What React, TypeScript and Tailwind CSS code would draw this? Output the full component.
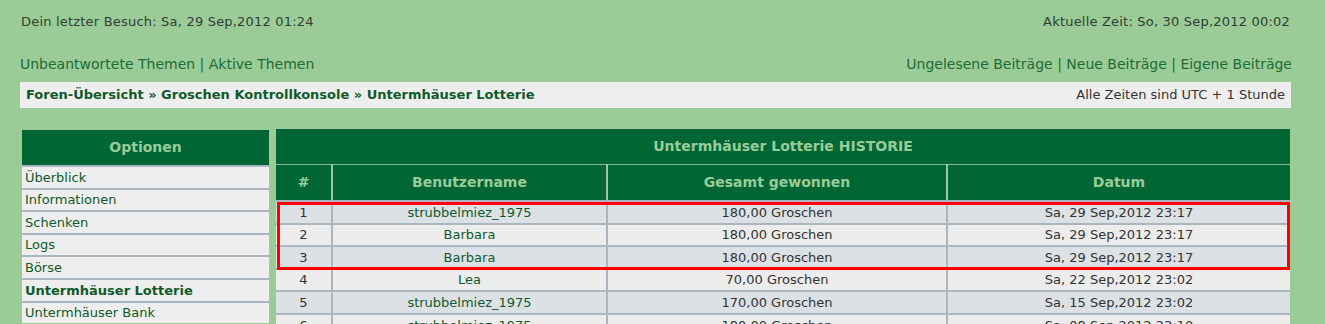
import React from "react";

const rows = [
  { n: 1, name: "strubbelmiez_1975", sum: "180,00 Groschen", date: "Sa, 29 Sep,2012 23:17" },
  { n: 2, name: "Barbara", sum: "180,00 Groschen", date: "Sa, 29 Sep,2012 23:17" },
  { n: 3, name: "Barbara", sum: "180,00 Groschen", date: "Sa, 29 Sep,2012 23:17" },
  { n: 4, name: "Lea", sum: "70,00 Groschen", date: "Sa, 22 Sep,2012 23:02" },
  { n: 5, name: "strubbelmiez_1975", sum: "170,00 Groschen", date: "Sa, 15 Sep,2012 23:02" },
  { n: 6, name: "strubbelmiez_1975", sum: "180,00 Groschen", date: "Sa, 08 Sep,2012 23:10" },
];

const menu = ["Überblick", "Informationen", "Schenken", "Logs", "Börse", "Untermhäuser Lotterie", "Untermhäuser Bank"];

export default function App() {
  return (
    <div className="h-[324px] overflow-hidden bg-[#9bcc98] px-[20px] text-[#2f3d33]" style={{ fontFamily: "Verdana, 'DejaVu Sans', sans-serif" }}>
      {/* kopf */}
      <div className="flex justify-between pt-[14px] text-[13px] leading-[16px] px-[1px] tracking-[0.2px]">
        <span>Dein letzter Besuch: Sa, 29 Sep,2012 01:24</span>
        <span className="pr-[14px]">Aktuelle Zeit: So, 30 Sep,2012 00:02</span>
      </div>
      <div className="flex justify-between mt-[26px] text-[14px] leading-[17px] text-[#1d6b35]">
        <span>Unbeantwortete Themen | Aktive Themen</span>
        <span className="pr-[13px]">Ungelesene Beiträge | Neue Beiträge | Eigene Beiträge</span>
      </div>
      <div className="mt-[9px] mr-[14px] h-[26px] bg-[#eeeeee] flex items-center justify-between px-[6px] text-[13px]">
        <span className="font-bold text-[#0f5a2a]">Foren-Übersicht » Groschen Kontrollkonsole » Untermhäuser Lotterie</span>
        <span className="text-[#333]">Alle Zeiten sind UTC + 1 Stunde</span>
      </div>

      <div className="flex mt-[21px] mr-[15px]">
        {/* optionen */}
        <div className="ml-[2px] mt-[1px] w-[247px] shrink-0">
          <div className="h-[35px] bg-[#006633] text-[#99cc99] font-bold text-[14px] flex items-center justify-center">Optionen</div>
          {menu.map((m) => (
            <div key={m} className={"h-[22.6px] bg-[#eeeeee] border-t-2 border-[#aab6bf] first:border-t-0 flex items-center px-[3px] text-[13px] text-[#0f5a2a] " + (m === "Untermhäuser Lotterie" ? "font-bold" : "")}>
              {m}
            </div>
          ))}
        </div>

        {/* historie */}
        <div className="relative ml-[7px] flex-1">
          <table className="w-full border-collapse text-[13px]">
            <thead>
              <tr>
                <th colSpan={4} className="h-[35px] bg-[#006633] text-[#99cc99] font-bold text-[14px] border-b border-[#88bb99]">Untermhäuser Lotterie HISTORIE</th>
              </tr>
              <tr className="bg-[#006633] text-[#99cc99] font-bold text-[14px]">
                <th className="h-[37px] w-[56px] border-r-2 border-[#9fc4b0]">#</th>
                <th className="w-[275px] border-r-2 border-[#9fc4b0]">Benutzername</th>
                <th className="w-[340px] border-r-2 border-[#9fc4b0]">Gesamt gewonnen</th>
                <th>Datum</th>
              </tr>
            </thead>
            <tbody>
              {rows.map((r) => (
                <tr key={r.n} className={(r.n % 2 === 1 ? "bg-[#dce1e5]" : "bg-[#ececec]") + " border-t-2 border-[#aab6bf] text-center"}>
                  <td className="h-[22.6px] border-r-2 border-[#aab6bf] text-[#333]">{r.n}</td>
                  <td className="border-r-2 border-[#aab6bf] text-[#0f5a2a]">{r.name}</td>
                  <td className="border-r-2 border-[#aab6bf] text-[#333]">{r.sum}</td>
                  <td className="text-[#333]">{r.date}</td>
                </tr>
              ))}
            </tbody>
          </table>
          {/* markierung */}
          <div className="absolute left-[1px] right-0 top-[73px] h-[68px] border-[3px] border-[#ff0000] pointer-events-none" />
        </div>
      </div>
    </div>
  );
}
